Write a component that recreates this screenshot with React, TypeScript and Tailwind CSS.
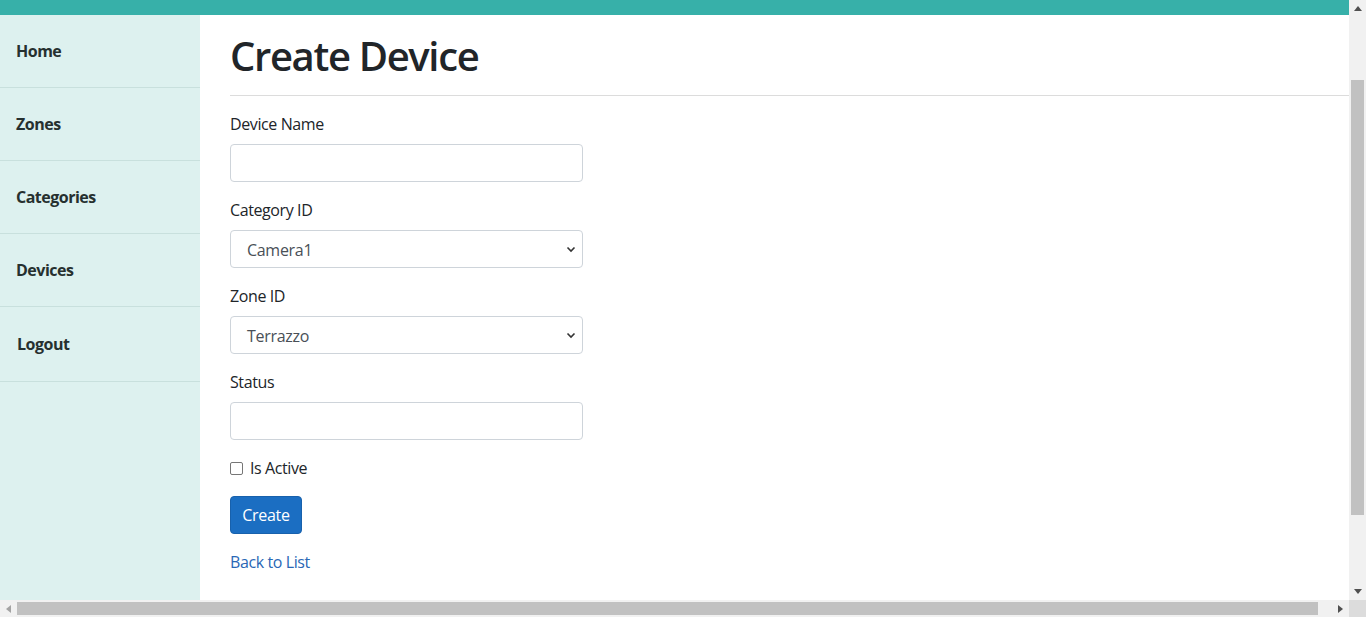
import React from "react";

const font = { fontFamily: '"Open Sans", "Noto Sans", sans-serif' };

function NavItem({ label, last }: { label: string; last?: boolean }) {
  return (
    <div
      className={`flex items-center border-b border-[#c8e0dd] text-[16px] font-bold tracking-[-0.5px] text-[#26302f] ${
        last ? "h-[75px] pl-[17px]" : "h-[73px] pl-[16px]"
      }`}
    >
      {label}
    </div>
  );
}

function Label({ children }: { children: React.ReactNode }) {
  return (
    <div className="mb-[8px] h-[24px] leading-[24px] text-[16px] tracking-[-0.4px] text-[#212529]">{children}</div>
  );
}

function TextInput() {
  return <div className="h-[38px] w-[353px] rounded-[4px] border border-[#ced4da] bg-white" />;
}

function Select({ value }: { value: string }) {
  return (
    <div className="flex h-[38px] w-[353px] items-center justify-between rounded-[4px] border border-[#ced4da] bg-white pl-[16px] pr-[6px] pt-[2px] text-[16px] tracking-[-0.3px] text-[#495057]">
      <span>{value}</span>
      <svg width="10" height="10" viewBox="0 0 10 10" className="-mt-[2px]">
        <path d="M1.5 3.5 L5 7 L8.5 3.5" fill="none" stroke="#333" strokeWidth="1.6" />
      </svg>
    </div>
  );
}

export default function App() {
  return (
    <div className="flex h-[617px] w-[1366px] flex-col overflow-hidden bg-white" style={font}>
      <div className="flex h-[600px]">
        <div className="flex flex-1 flex-col">
          <div className="h-[15px] bg-[#37b0a9]" />
          <div className="flex flex-1">
            <nav className="w-[200px] bg-[#ddf1ef]">
              <NavItem label="Home" />
              <NavItem label="Zones" />
              <NavItem label="Categories" />
              <NavItem label="Devices" />
              <NavItem label="Logout" last />
            </nav>
            <main className="flex-1 pl-[30px] text-[#212529]">
              <h1 className="mt-[17px] h-[48px] text-[40px] font-semibold leading-[48px] tracking-[-1.35px] text-[#212529]">
                Create Device
              </h1>
              <div className="mt-[15px] h-px bg-[#dcdcdc]" />
              <div className="mt-[16px] flex flex-col">
                <div className="mb-[16px]">
                  <Label>Device Name</Label>
                  <TextInput />
                </div>
                <div className="mb-[16px]">
                  <Label>Category ID</Label>
                  <Select value="Camera1" />
                </div>
                <div className="mb-[16px]">
                  <Label>Zone ID</Label>
                  <Select value="Terrazzo" />
                </div>
                <div className="mb-[16px]">
                  <Label>Status</Label>
                  <TextInput />
                </div>
                <div className="mb-[16px] flex h-[24px] items-center text-[16px] tracking-[-0.4px]">
                  <div className="h-[13px] w-[13px] rounded-[2px] border border-[#767676] bg-white" />
                  <span className="ml-[7px]">Is Active</span>
                </div>
                <div>
                  <div className="flex h-[38px] w-[72px] items-center justify-center rounded-[4px] border border-[#1861ac] bg-[#1b6ec2] text-[16px] tracking-[-0.3px] text-white">
                    Create
                  </div>
                </div>
                <div className="mt-[16px] h-[24px] leading-[24px] text-[16px] tracking-[-0.4px] text-[#2a67b5]">
                  Back to List
                </div>
              </div>
            </main>
          </div>
        </div>
        <div className="flex w-[17px] flex-col bg-[#f1f1f1]">
          <div className="flex h-[17px] items-center justify-center">
            <svg width="8" height="5" viewBox="0 0 8 5">
              <path d="M0 5 L4 0 L8 5 Z" fill="#505050" />
            </svg>
          </div>
          <div className="mt-[63px] ml-[2px] h-[435px] w-[13px] bg-[#c1c1c1]" />
          <div className="flex-1" />
          <div className="flex h-[17px] items-center justify-center">
            <svg width="8" height="5" viewBox="0 0 8 5">
              <path d="M0 0 L4 5 L8 0 Z" fill="#505050" />
            </svg>
          </div>
        </div>
      </div>
      <div className="flex h-[17px] bg-[#f1f1f1]">
        <div className="flex w-[17px] items-center justify-center">
          <svg width="5" height="8" viewBox="0 0 5 8">
            <path d="M5 0 L0 4 L5 8 Z" fill="#a3a3a3" />
          </svg>
        </div>
        <div className="mt-[2px] h-[13px] w-[1301px] bg-[#c1c1c1]" />
        <div className="flex-1" />
        <div className="flex w-[17px] items-center justify-center">
          <svg width="5" height="8" viewBox="0 0 5 8">
            <path d="M0 0 L5 4 L0 8 Z" fill="#505050" />
          </svg>
        </div>
        <div className="w-[17px] bg-[#dcdcdc]" />
      </div>
    </div>
  );
}
